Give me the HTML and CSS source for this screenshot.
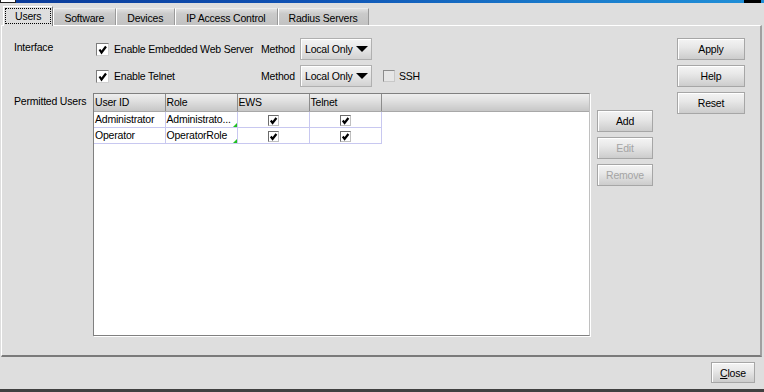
FILE: index.html
```html
<!DOCTYPE html>
<html lang="en">
<head>
    <meta charset="UTF-8">
    <title>Users</title>
    <link rel="stylesheet" href="styles.css">
</head>
<body>
    <div class="window">
        <div class="titlebar">
            <span class="sysbox"></span>
            <span class="closebox"></span>
        </div>

        <nav class="tabs">
            <a class="tab active"><span class="focus">Users</span></a>
            <a class="tab">Software</a>
            <a class="tab">Devices</a>
            <a class="tab">IP Access Control</a>
            <a class="tab">Radius Servers</a>
        </nav>

        <main class="panel">
            <div class="form">
                <div class="field-label">Interface</div>
                <div class="row">
                    <label class="check-field">
                        <span class="check"><svg viewBox="0 0 11 11"><path d="M2.5 5.5 L4.5 8.5 L9 2.5"/></svg></span>
                        Enable Embedded Web Server
                    </label>
                    <span class="method">Method</span>
                    <div class="combo">Local Only<span class="arrow"></span></div>
                </div>

                <div class="field-label"></div>
                <div class="row">
                    <label class="check-field">
                        <span class="check"><svg viewBox="0 0 11 11"><path d="M2.5 5.5 L4.5 8.5 L9 2.5"/></svg></span>
                        Enable Telnet
                    </label>
                    <span class="method">Method</span>
                    <div class="combo">Local Only<span class="arrow"></span></div>
                    <label class="ssh">
                        <span class="check unchecked"></span>
                        SSH
                    </label>
                </div>

                <div class="field-label users-label">Permitted Users</div>
                <div class="grid">
                    <table>
                        <colgroup>
                            <col class="c-id">
                            <col class="c-role">
                            <col class="c-flag">
                            <col class="c-flag">
                            <col>
                        </colgroup>
                        <thead>
                            <tr>
                                <th>User ID</th>
                                <th>Role</th>
                                <th>EWS</th>
                                <th>Telnet</th>
                                <th class="filler"></th>
                            </tr>
                        </thead>
                        <tbody>
                            <tr>
                                <td>Administrator</td>
                                <td class="role">Administrato...</td>
                                <td class="flag"><span class="mini-check"><svg viewBox="0 0 9 9"><path d="M1.8 4.5 L3.6 7 L7.4 2"/></svg></span></td>
                                <td class="flag"><span class="mini-check"><svg viewBox="0 0 9 9"><path d="M1.8 4.5 L3.6 7 L7.4 2"/></svg></span></td>
                                <td class="filler"></td>
                            </tr>
                            <tr>
                                <td>Operator</td>
                                <td class="role">OperatorRole</td>
                                <td class="flag"><span class="mini-check"><svg viewBox="0 0 9 9"><path d="M1.8 4.5 L3.6 7 L7.4 2"/></svg></span></td>
                                <td class="flag"><span class="mini-check"><svg viewBox="0 0 9 9"><path d="M1.8 4.5 L3.6 7 L7.4 2"/></svg></span></td>
                                <td class="filler"></td>
                            </tr>
                        </tbody>
                    </table>
                </div>
            </div>

            <div class="table-actions">
                <button class="btn">Add</button>
                <button class="btn" disabled>Edit</button>
                <button class="btn" disabled>Remove</button>
            </div>

            <div class="actions">
                <button class="btn">Apply</button>
                <button class="btn">Help</button>
                <button class="btn">Reset</button>
            </div>
        </main>

        <footer class="footer">
            <button class="btn close"><u>C</u>lose</button>
        </footer>
        <div class="edge"></div>
    </div>
</body>
</html>
```

FILE: styles.css
```css
:root {
    --bg: #dedede;
    --dark: #808080;
    --grid-line: #c8c8f0;
    --text: #000;
}

* {
    box-sizing: border-box;
    margin: 0;
    padding: 0;
}

body {
    font-family: "Liberation Sans", Arial, sans-serif;
    font-size: 10.5px;
    letter-spacing: -0.2px;
    color: var(--text);
    background: var(--bg);
}

.window {
    width: 764px;
    height: 392px;
    display: flex;
    flex-direction: column;
    background: var(--bg);
    overflow: hidden;
    white-space: nowrap;
}

/* title strip */
.titlebar {
    height: 3px;
    display: flex;
    justify-content: space-between;
    background: linear-gradient(90deg, #0b3a98, #0f52b4 40%, #1a7ccc 75%, #2090d8);
}

.sysbox {
    width: 16px;
    height: 3px;
    background: #fff;
    border: 1px solid #202020;
    border-top: 0;
}

.closebox {
    width: 17px;
    height: 3px;
    margin-right: 3px;
    background: #000;
}

/* tabs */
.tabs {
    height: 22px;
    display: flex;
    align-items: flex-end;
    padding-left: 3px;
}

.tab {
    height: 17px;
    padding: 1px 11px 0 10px;
    display: flex;
    align-items: center;
    background: linear-gradient(#e0e0e0, #cacaca 30%, #c2c2c2);
    border-left: 1px solid #fff;
    border-top: 1px solid #ececec;
    border-right: 1px solid #9a9a9a;
}

.tab.active {
    height: 20px;
    margin-bottom: -1px;
    padding: 1px 1px 2px 1px;
    background: var(--bg);
    border-top-color: #fff;
    border-right-color: var(--dark);
    position: relative;
    z-index: 1;
}

.tab .focus {
    display: flex;
    align-items: center;
    height: 100%;
    padding: 0 9px;
    border: 1px dotted #000;
}

/* panel */
.panel {
    height: 332px;
    margin: 0 2px 0 1px;
    padding: 12px 0 0 12px;
    display: flex;
    align-items: flex-start;
    border-top: 1px solid #fff;
    border-left: 1px solid #fff;
    border-right: 2px solid #a0a0a0;
    border-bottom: 2px solid #7a7a7a;
}

.form {
    display: grid;
    grid-template-columns: 79px 497px;
    grid-template-rows: 22px 22px 243px;
    row-gap: 5px;
}

.field-label {
    padding-top: 3px;
}

.users-label {
    padding-top: 2px;
    margin-top: 1px;
}

.row {
    display: flex;
    align-items: center;
}

.check-field {
    width: 168px;
    flex: none;
    padding-left: 3px;
    display: flex;
    align-items: center;
    gap: 5px;
}

.check {
    width: 13px;
    height: 13px;
    flex: none;
    background: #fff;
    border: 1px solid;
    border-color: #7c7c7c #d0d0d0 #d0d0d0 #7c7c7c;
    display: inline-flex;
}

.check svg {
    width: 11px;
    height: 11px;
}

.check path,
.mini-check path {
    fill: none;
    stroke: #000;
    stroke-width: 2.2;
}

.check.unchecked {
    width: 12px;
    height: 12px;
    background: #e6e6e6;
    border-color: #8c8c8c #c8c8c8 #c8c8c8 #8c8c8c;
}

.method {
    width: 39px;
    flex: none;
}

.combo {
    width: 72px;
    height: 22px;
    flex: none;
    padding-left: 4px;
    display: flex;
    align-items: center;
    justify-content: space-between;
    background: linear-gradient(#f4f4f4, #e6e6e6 50%, #d2d2d2);
    border: 1px solid #b0b0b0;
    box-shadow: inset 1px 1px 0 #fff;
}

.arrow {
    margin-right: 3px;
    border-left: 6px solid transparent;
    border-right: 6px solid transparent;
    border-top: 6px solid #000;
}

.ssh {
    margin-left: 11px;
    display: flex;
    align-items: center;
    gap: 4px;
}

/* user table */
.grid {
    margin-top: 1px;
    height: 243px;
    background: #fff;
    border: 1px solid var(--dark);
    border-right-color: #c0c0c0;
    box-shadow: 1px 1px 0 #fff;
    overflow: hidden;
}

table {
    width: 100%;
    border-collapse: collapse;
    table-layout: fixed;
}

.c-id { width: 71px; }
.c-role { width: 72px; }
.c-flag { width: 72px; }

th {
    height: 17px;
    padding: 0 1px;
    text-align: left;
    font-weight: normal;
    background: linear-gradient(#eeeeee, #dedede 45%, #c6c6c6);
    border-right: 1px solid #8c8c8c;
    border-bottom: 1px solid #a8a8a8;
}

th.filler {
    border-right: 0;
}

td {
    height: 16px;
    padding: 0 1px;
    overflow: hidden;
    border-right: 1px solid var(--grid-line);
    border-bottom: 1px solid var(--grid-line);
}

td.filler {
    border: 0;
}

td.role {
    position: relative;
}

td.role::after {
    content: '';
    position: absolute;
    right: 0;
    bottom: 0;
    border-left: 4px solid transparent;
    border-bottom: 4px solid #20c020;
}

td.flag {
    text-align: center;
    padding-top: 1px;
}

.mini-check {
    width: 11px;
    height: 11px;
    display: inline-flex;
    vertical-align: middle;
    background: #fff;
    border: 1px solid;
    border-color: #6c6c6c #c0c0c0 #c0c0c0 #6c6c6c;
}

.mini-check svg {
    width: 9px;
    height: 9px;
}

/* buttons */
.btn {
    height: 22px;
    font: inherit;
    letter-spacing: inherit;
    color: var(--text);
    background: linear-gradient(#f4f4f4, #e8e8e8 40%, #cccccc);
    border: 1px solid #a6a6a6;
    box-shadow: inset 1px 1px 0 #fff;
}

.btn:disabled {
    color: #a4a4a4;
}

.table-actions {
    width: 56px;
    margin-left: 7px;
    padding-top: 72px;
    display: flex;
    flex-direction: column;
    gap: 5px;
}

.actions {
    width: 68px;
    margin-left: 24px;
    display: flex;
    flex-direction: column;
    gap: 5px;
}

/* footer */
.footer {
    height: 32px;
    padding: 5px 9px 0 0;
    display: flex;
    justify-content: flex-end;
    align-items: flex-start;
}

.btn.close {
    width: 44px;
    height: 21px;
}

.edge {
    height: 3px;
    background: #404040;
}
```
